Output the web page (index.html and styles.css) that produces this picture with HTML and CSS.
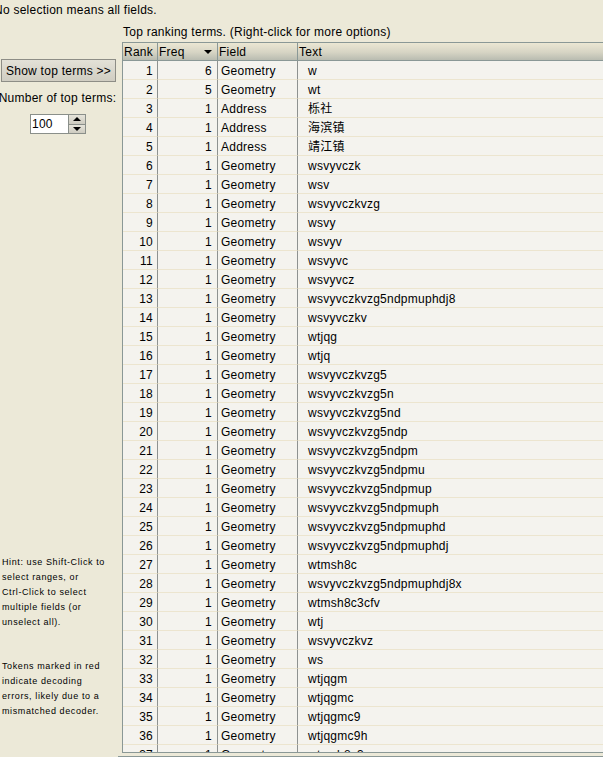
FILE: index.html
```html
<!DOCTYPE html>
<html>
<head>
<meta charset="utf-8">
<link rel="stylesheet" href="styles.css">
</head>
<body>
<div class="top-note">No selection means all fields.</div>
<div class="main">
  <div class="left">
    <button class="btn">Show top terms &gt;&gt;</button>
    <div class="num-label">Number of top terms:</div>
    <div class="spinner">
      <div class="spin-field">100</div>
      <div class="spin-btns">
        <div class="spin-btn"><span class="tri-up"></span></div>
        <div class="spin-btn"><span class="tri-down"></span></div>
      </div>
    </div>
    <div class="hints">
      <p>Hint: use Shift-Click to<br>select ranges, or<br>Ctrl-Click to select<br>multiple fields (or<br>unselect all).</p>
      <p>Tokens marked in red<br>indicate decoding<br>errors, likely due to a<br>mismatched decoder.</p>
    </div>
  </div>
  <div class="right">
    <div class="tbl-label">Top ranking terms. (Right-click for more options)</div>
    <div class="scroll">
      <table class="terms">
        <colgroup><col class="c-rank"><col class="c-freq"><col class="c-field"><col class="c-text"></colgroup>
        <thead>
          <tr><th>Rank</th><th><div class="th-sort"><span>Freq</span><span class="tri-down"></span></div></th><th>Field</th><th>Text</th></tr>
        </thead>
        <tbody id="rows"></tbody>
      </table>
    </div>
    <div class="bottom-gap"></div>
  </div>
</div>
<script src="app.js"></script>
</body>
</html>
```
FILE: app.js
```js
var data = [
  [6,"Geometry","w"],[5,"Geometry","wt"],[1,"Address","栎社"],[1,"Address","海滨镇"],[1,"Address","靖江镇"],
  [1,"Geometry","wsvyvczk"],[1,"Geometry","wsv"],[1,"Geometry","wsvyvczkvzg"],[1,"Geometry","wsvy"],
  [1,"Geometry","wsvyv"],[1,"Geometry","wsvyvc"],[1,"Geometry","wsvyvcz"],[1,"Geometry","wsvyvczkvzg5ndpmuphdj8"],
  [1,"Geometry","wsvyvczkv"],[1,"Geometry","wtjqg"],[1,"Geometry","wtjq"],[1,"Geometry","wsvyvczkvzg5"],
  [1,"Geometry","wsvyvczkvzg5n"],[1,"Geometry","wsvyvczkvzg5nd"],[1,"Geometry","wsvyvczkvzg5ndp"],
  [1,"Geometry","wsvyvczkvzg5ndpm"],[1,"Geometry","wsvyvczkvzg5ndpmu"],[1,"Geometry","wsvyvczkvzg5ndpmup"],
  [1,"Geometry","wsvyvczkvzg5ndpmuph"],[1,"Geometry","wsvyvczkvzg5ndpmuphd"],[1,"Geometry","wsvyvczkvzg5ndpmuphdj"],
  [1,"Geometry","wtmsh8c"],[1,"Geometry","wsvyvczkvzg5ndpmuphdj8x"],[1,"Geometry","wtmsh8c3cfv"],
  [1,"Geometry","wtj"],[1,"Geometry","wsvyvczkvz"],[1,"Geometry","ws"],[1,"Geometry","wtjqgm"],
  [1,"Geometry","wtjqgmc"],[1,"Geometry","wtjqgmc9"],[1,"Geometry","wtjqgmc9h"],[1,"Geometry","wtmsh8c3"]
];
var tb = document.getElementById("rows");
data.forEach(function (d, i) {
  var tr = document.createElement("tr");
  var cells = [String(i + 1), String(d[0]), d[1], d[2]];
  var cls = ["rank", "freq", "field", "text"];
  cells.forEach(function (c, j) {
    var td = document.createElement("td");
    td.className = cls[j];
    td.textContent = c;
    tr.appendChild(td);
  });
  tb.appendChild(tr);
});
```
FILE: styles.css
```css
html, body {
  margin: 0;
  padding: 0;
}
body {
  width: 603px;
  height: 757px;
  overflow: hidden;
  background: #ece9d8;
  font-family: "Liberation Sans", Arial, "Noto Sans CJK SC", sans-serif;
  font-size: 12px;
  letter-spacing: 0.25px;
  color: #000;
}
.top-note {
  height: 20px;
  line-height: 20px;
  margin-left: -6px;
  white-space: nowrap;
}
.main {
  display: flex;
  height: 737px;
}
.left {
  width: 118px;
  padding-right: 4px;
  display: flex;
  flex-direction: column;
  align-items: center;
  flex: none;
}
.btn {
  align-self: flex-start;
  margin: 39px 0 0 1px;
  width: 115px;
  height: 23px;
  padding: 0;
  border: 1px solid #8d8d86;
  background: linear-gradient(to bottom, #e3e1d7, #d0cdc2);
  font-family: "Liberation Sans", Arial, sans-serif;
  font-size: 12px;
  letter-spacing: 0.25px;
  color: #000;
}
.num-label {
  margin-top: 9px;
  height: 14px;
  line-height: 14px;
  white-space: nowrap;
  margin-left: -3px;
}
.spinner {
  margin-top: 9px;
  display: flex;
  width: 56px;
  height: 20px;
  margin-left: -2px;
}
.spin-field {
  width: 36px;
  height: 18px;
  border: 1px solid #8a8f8a;
  border-right: none;
  background: #fff;
  line-height: 19px;
  padding-left: 1px;
  box-sizing: content-box;
}
.spin-btns {
  display: flex;
  flex-direction: column;
  width: 18px;
  height: 20px;
  border: 1px solid #8a8f8a;
  box-sizing: border-box;
}
.spin-btn {
  flex: 1;
  display: flex;
  align-items: center;
  justify-content: center;
  background: linear-gradient(to bottom, #e6e4da, #cdcbc0);
}
.spin-btn + .spin-btn {
  border-top: 1px solid #8a8f8a;
}
.tri-up {
  width: 0;
  height: 0;
  border-left: 4px solid transparent;
  border-right: 4px solid transparent;
  border-bottom: 4px solid #000;
}
.tri-down {
  width: 0;
  height: 0;
  border-left: 4px solid transparent;
  border-right: 4px solid transparent;
  border-top: 4px solid #000;
}
.hints {
  align-self: flex-start;
  margin-top: 421px;
  margin-left: 2px;
  font-size: 9px;
  letter-spacing: 0.6px;
  line-height: 15px;
}
.hints p {
  margin: 0 0 29px 0;
  white-space: nowrap;
}
.right {
  flex: 1;
  display: flex;
  flex-direction: column;
  min-width: 0;
}
.tbl-label {
  height: 20px;
  padding-top: 2px;
  line-height: 20px;
  padding-left: 1px;
  white-space: nowrap;
}
.scroll {
  height: 710px;
  border-left: 1px solid #8a9896;
  border-bottom: 1px solid #8a9896;
  overflow: hidden;
  background: #ece9d8;
}
.bottom-gap {
  height: 3px;
  border-bottom: 1px solid #8a9896;
  margin-left: -4px;
}
.terms {
  border-collapse: separate;
  border-spacing: 0;
  table-layout: fixed;
  width: 575px;
}
.c-rank { width: 35px; }
.c-freq { width: 60px; }
.c-field { width: 80px; }
.c-text { width: 400px; }
.terms th {
  height: 16px;
  padding: 1px 0 0 1px;
  text-align: left;
  font-weight: normal;
  border-top: 1px solid #8a9896;
  border-bottom: 1px solid #8a9896;
  border-right: 1px solid #8a9896;
  background: linear-gradient(to bottom, #ebe7d3 0%, #d6d4c4 55%, #b9bcb1 100%);
  line-height: 16px;
  white-space: nowrap;
  overflow: hidden;
}
.terms th:last-child {
  border-right: none;
}
.th-sort {
  display: flex;
  align-items: center;
  justify-content: space-between;
  padding-right: 5px;
}
.terms td {
  height: 16px;
  padding: 2px 0 0 0;
  line-height: 16px;
  background: #f4f3ee;
  border-bottom: 1px solid #ece5cf;
  white-space: nowrap;
  overflow: hidden;
}
.terms td.rank {
  text-align: right;
  padding-right: 4px;
  border-right: 1px solid #8e9290;
}
.terms td.freq {
  text-align: right;
  padding-right: 5px;
  border-right: 1px solid #8e9290;
}
.terms td.field {
  padding-left: 3px;
  border-right: 1px solid #8e9290;
}
.terms td.text {
  padding-left: 10px;
}
```
